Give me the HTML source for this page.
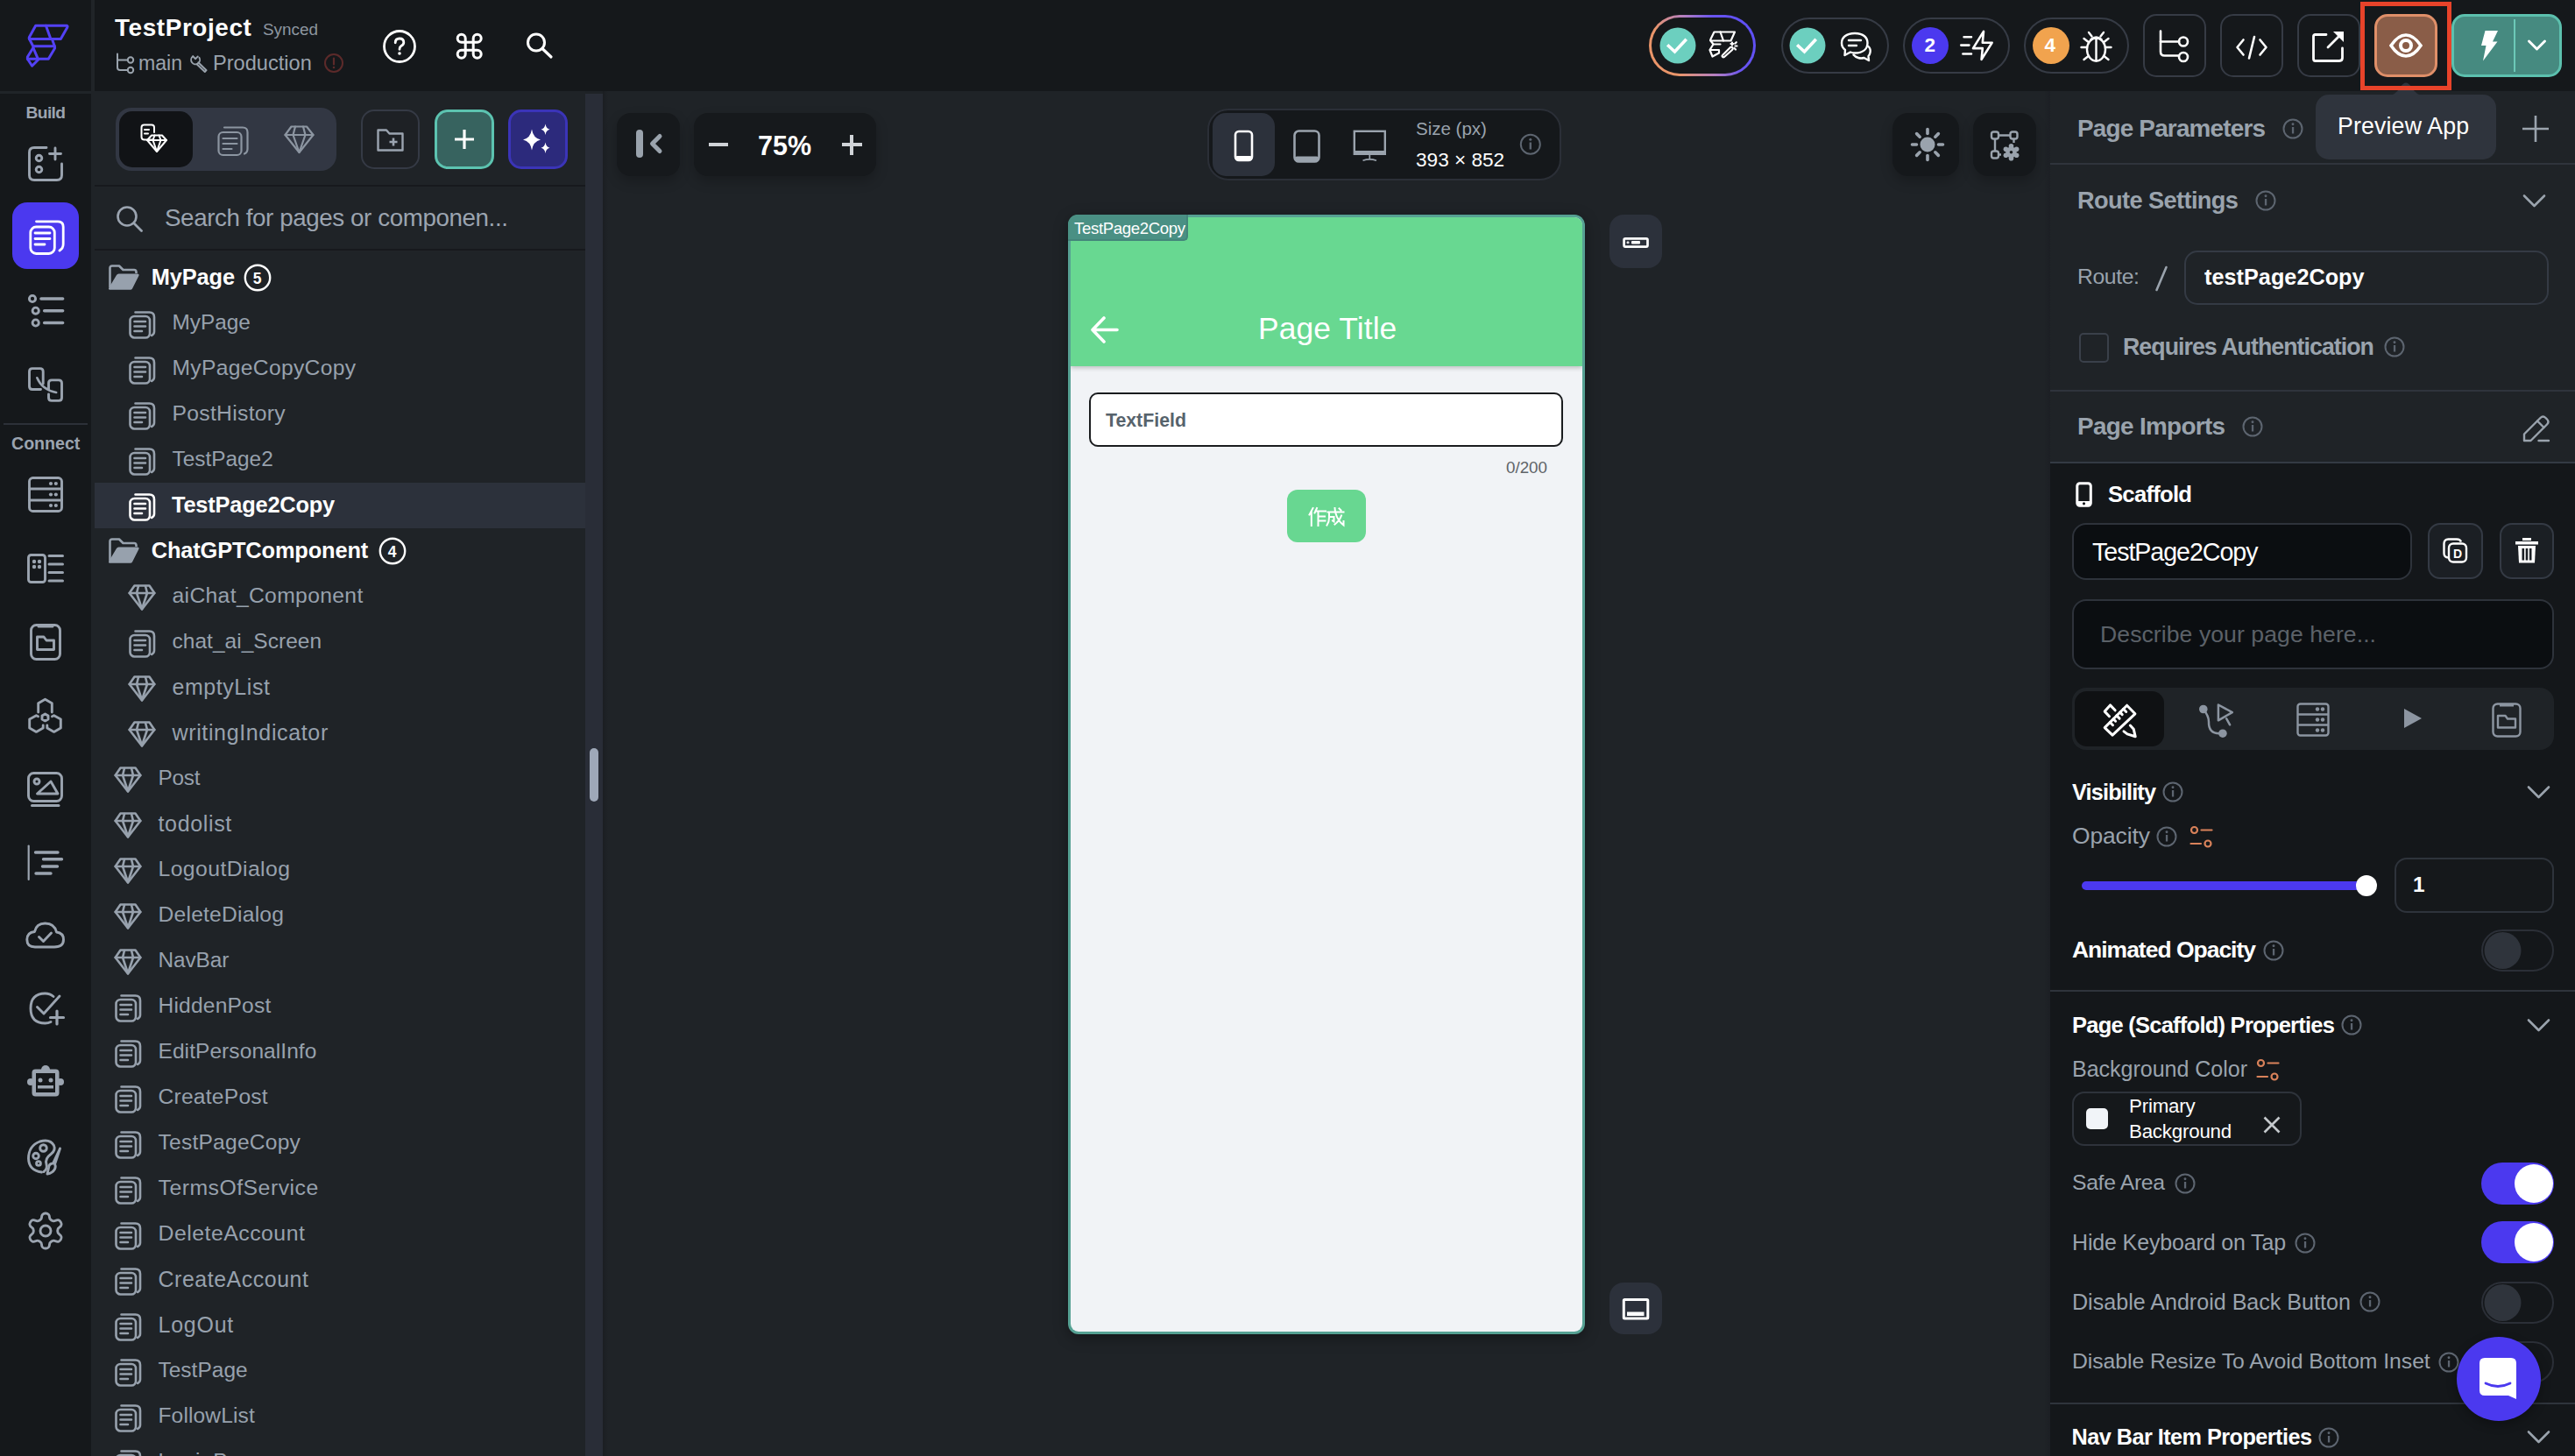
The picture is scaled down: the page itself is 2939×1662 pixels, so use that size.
<!DOCTYPE html>
<html><head><meta charset="utf-8">
<style>
*{box-sizing:border-box;margin:0;padding:0}
html,body{width:2939px;height:1662px;overflow:hidden;background:#1e2226;font-family:"Liberation Sans",sans-serif}
.a{position:absolute}
.t{position:absolute;white-space:nowrap;line-height:1}
svg{position:absolute;overflow:visible}
</style></head><body>
<div class="a" style="left:0px;top:0px;width:2939px;height:104px;background:#15181b;border-radius:0px;"></div>
<div class="a" style="left:0px;top:104px;width:104px;height:1558px;background:#15181b;border-radius:0px;"></div>
<div class="a" style="left:104px;top:0px;width:4px;height:104px;background:#202428;border-radius:0px;"></div>
<div class="a" style="left:0px;top:104px;width:108px;height:3px;background:#202428;border-radius:0px;"></div>
<div class="a" style="left:104px;top:104px;width:4px;height:1558px;background:#1f2327;border-radius:0px;"></div>
<div class="a" style="left:108px;top:104px;width:560px;height:1558px;background:#1f2327;border-radius:0px;"></div>
<div class="a" style="left:668px;top:107px;width:20px;height:1555px;background:#292d37;border-radius:0px;"></div>
<div class="a" style="left:673px;top:854px;width:10px;height:61px;background:#9ea8b8;border-radius:5px;"></div>
<div class="a" style="left:688px;top:104px;width:1652px;height:1558px;background:#1f2327;border-radius:0px;"></div>
<div class="a" style="left:688px;top:104px;width:6px;height:1558px;background:linear-gradient(90deg,#1b1e22,#1f2327)"></div>
<div class="a" style="left:2333px;top:104px;width:7px;height:1558px;background:linear-gradient(90deg,#1f2327,#1c1f24)"></div>
<div class="a" style="left:2340px;top:104px;width:599px;height:424px;background:#1f2327;border-radius:0px;"></div>
<div class="a" style="left:2340px;top:528px;width:599px;height:1134px;background:#14171a;border-radius:0px;"></div>
<svg style="left:0px;top:0px;" width="100" height="100" viewBox="0 0 100 100"><g fill="none" stroke="#5341f5" stroke-width="3" stroke-linejoin="round" stroke-linecap="round"><path d="M40.7,29.2 L76.2,29.2 Q77.6,29.6 76.8,31.2 L69.3,44.5 L33.5,44.5 Q32.8,43.6 33.4,42.4 Z"/><path d="M52.4,29.2 L57.9,44.5"/><path d="M33.5,44.5 L37.8,52.7 L62.3,52.7 L59.4,44.5"/><path d="M62.3,52.7 L62.6,55 L55.3,67.3 L31.4,67.3 L31.4,65 L37.9,54.5"/><path d="M37.9,54.5 L43.4,67.3"/><path d="M31.4,67.3 L36.6,75.2 L43.8,68"/></g></svg>
<div class="t" style="left:131px;top:18.38px;font-size:27.9px;color:#ffffff;font-weight:bold;letter-spacing:0.6px;">TestProject</div>
<div class="t" style="left:300px;top:25.00px;font-size:18.9px;color:#8d96a0;font-weight:normal;letter-spacing:0px;">Synced</div>
<svg style="left:132px;top:60px;" width="24" height="24" viewBox="0 0 24 24"><g fill="none" stroke="#9aa3ad" stroke-width="2" stroke-linecap="round"><path d="M2,1.5 V17 Q2,20 5,20 H13"/><path d="M2,8.5 H13"/><circle cx="17" cy="8.5" r="3.2"/><circle cx="17" cy="20" r="3.2"/></g></svg>
<div class="t" style="left:158px;top:61.45px;font-size:23.1px;color:#9aa3ad;font-weight:normal;letter-spacing:0px;">main</div>
<svg style="left:210px;top:56px;" width="40" height="32" viewBox="0 0 40 32"><g fill="none" stroke="#9aa3ad" stroke-width="1.9" stroke-linejoin="round" stroke-linecap="round"><path d="M10.2,8.3 A5,5 0 1 0 17.4,9.7"/><path d="M10.2,8.3 L13.2,11.2 L15.8,8.4"/><path d="M16.3,15.3 L25.6,24.2 L23.8,26 L14.6,17.2"/></g></svg>
<div class="t" style="left:243px;top:61.02px;font-size:23.6px;color:#9aa3ad;font-weight:normal;letter-spacing:0px;">Production</div>
<svg style="left:370px;top:61px;" width="22" height="22" viewBox="0 0 22 22"><circle cx="11" cy="11" r="10" fill="none" stroke="#5c2a2a" stroke-width="2"/><path d="M11,5.5 V12.5" stroke="#5c2a2a" stroke-width="2.2" stroke-linecap="round"/><circle cx="11" cy="16" r="1.3" fill="#5c2a2a"/></svg>
<svg style="left:437px;top:34px;" width="38" height="38" viewBox="0 0 38 38"><circle cx="19" cy="19" r="17.5" fill="none" stroke="#fff" stroke-width="2.8"/><path d="M14.2,14.8 Q14.2,10 19,10 Q23.8,10 23.8,14.5 Q23.8,17 20.8,18.6 Q19,19.6 19,22.3" fill="none" stroke="#fff" stroke-width="2.8" stroke-linecap="round"/><circle cx="19" cy="27" r="1.8" fill="#fff"/></svg>
<svg style="left:520px;top:37px;" width="31" height="31" viewBox="0 0 31 31"><path transform="translate(-2.3,-2.3) scale(1.5)" fill="none" stroke="#fff" stroke-width="2" d="M15 6v12a3 3 0 1 0 3-3H6a3 3 0 1 0 3 3V6a3 3 0 1 0-3 3h12a3 3 0 1 0-3-3"/></svg>
<svg style="left:599.5px;top:37px;" width="31" height="29" viewBox="0 0 31 29"><circle cx="12" cy="11.5" r="9.5" fill="none" stroke="#fff" stroke-width="3"/><path d="M19,18.5 L29,28" stroke="#fff" stroke-width="3.2" stroke-linecap="round"/></svg>
<div class="a" style="left:1882px;top:17px;width:122px;height:70px;border-radius:35px;background:linear-gradient(62deg,#eb9468 0%,#e9956a 22%,#b47fc0 48%,#6a55f0 68%,#5a4df7 100%)"></div>
<div class="a" style="left:1885px;top:20px;width:116px;height:64px;background:#15181b;border-radius:32px;"></div>
<svg style="left:1894px;top:31px;" width="42" height="42" viewBox="0 0 42 42"><circle cx="21" cy="21" r="20.5" fill="#6ccfbf"/><path d="M10.5,21.5 L17.5,28 L29.5,15" fill="none" stroke="#fff" stroke-width="3.6" stroke-linecap="square"/></svg>
<svg style="left:1950px;top:35px;" width="34" height="34" viewBox="0 0 34 34"><g fill="none" stroke="#fff" stroke-width="2.2" stroke-linejoin="round" stroke-linecap="round"><path d="M6.5,1.5 H30 L25.5,11.5 H2.5 Q1.8,10.8 2.3,10 Z"/><path d="M13.5,1.5 L17,11.5"/><path d="M2.5,11.5 L5.5,15.5 H13.5"/><path d="M5.5,15.5 L1.5,22 L4.5,29.5 L12,25.5 V22 H1.5"/><path d="M16,28 L25,19 Q26.5,18 27.5,19.5 Q28.3,20.8 27,22 L18,30 Q16.5,30.8 15.7,29.5 Q15.2,28.7 16,28 Z"/><path d="M27,13.5 V16.5 M25.5,15 H28.5 M30.5,14.5 L31.8,13.2 M30.5,17.5 H32.5 M29.5,20 L31,21.5"/></g></svg>
<div class="a" style="left:2033px;top:20px;width:123px;height:64px;background:#15181b;border:2px solid #363b45;border-radius:32px;"></div>
<svg style="left:2042px;top:31px;" width="42" height="42" viewBox="0 0 42 42"><circle cx="21" cy="21" r="20.5" fill="#6ccfbf"/><path d="M10.5,21.5 L17.5,28 L29.5,15" fill="none" stroke="#fff" stroke-width="3.6" stroke-linecap="square"/></svg>
<svg style="left:2100px;top:36px;" width="38" height="36" viewBox="0 0 38 36"><g fill="none" stroke="#fff" stroke-width="2.4" stroke-linejoin="round" stroke-linecap="round"><path d="M17,2 C7,2 2,7 2,13 C2,17 4,19.5 6,21 L5.5,27 L12,23.5 Q14.5,24.5 17,24.5 C27,24.5 31.5,19.5 31.5,13 C31.5,7 27,2 17,2 Z"/><path d="M10,10 H24 M10,16 H19"/><path d="M32.5,17 Q35.5,20 34.5,24 Q34,26.5 32.5,28 L33,33 L27.5,30 Q24,31 21,30 Q17.5,29 15.5,26.5"/></g></svg>
<div class="a" style="left:2172px;top:20px;width:122px;height:64px;background:#15181b;border:2px solid #363b45;border-radius:32px;"></div>
<svg style="left:2182px;top:31px;" width="42" height="42" viewBox="0 0 42 42"><circle cx="21" cy="21" r="21" fill="#4b39ef"/></svg>
<div class="t" style="left:2196.5px;top:40.95px;font-size:22.5px;color:#ffffff;font-weight:bold;letter-spacing:0px;">2</div>
<svg style="left:2237px;top:35px;" width="40" height="36" viewBox="0 0 40 36"><g fill="none" stroke="#fff" stroke-width="2.6" stroke-linejoin="round" stroke-linecap="round"><path d="M27,0.9 L15,20.1 H25.8 L24.6,32.9 L36.6,13.7 H25.8 Z"/><path d="M4.6,7.3 H13 M1.3,16.6 H10.4 M3.4,26.5 H13"/></g></svg>
<div class="a" style="left:2310px;top:20px;width:120px;height:64px;background:#15181b;border:2px solid #363b45;border-radius:32px;"></div>
<svg style="left:2320px;top:31px;" width="42" height="42" viewBox="0 0 42 42"><circle cx="21" cy="21" r="21" fill="#f1a34e"/></svg>
<div class="t" style="left:2333.5px;top:40.95px;font-size:22.5px;color:#ffffff;font-weight:bold;letter-spacing:0px;">4</div>
<svg style="left:2374px;top:35px;" width="37" height="37" viewBox="0 0 37 37"><g fill="none" stroke="#fff" stroke-width="2.4" stroke-linecap="round" stroke-linejoin="round"><ellipse cx="18.5" cy="21.5" rx="10.5" ry="13"/><path d="M18.5,8.5 V34.5"/><path d="M12.5,10 Q18.5,5 24.5,10"/><path d="M10,2 L13.5,6.5 M27,2 L23.5,6.5 M1.5,19 H7.5 M29.5,19 H35.5 M4.5,9 L9,12.5 M32.5,9 L28,12.5 M4.5,33 L9,29.5 M32.5,33 L28,29.5"/></g></svg>
<div class="a" style="left:2446px;top:16px;width:72px;height:72px;background:#15181b;border:2px solid #363b45;border-radius:15px;"></div>
<div class="a" style="left:2534px;top:16px;width:72px;height:72px;background:#15181b;border:2px solid #363b45;border-radius:15px;"></div>
<div class="a" style="left:2622px;top:16px;width:72px;height:72px;background:#15181b;border:2px solid #363b45;border-radius:15px;"></div>
<svg style="left:2464px;top:34px;" width="36" height="38" viewBox="0 0 36 38"><g fill="none" stroke="#fff" stroke-width="2.6" stroke-linecap="round"><path d="M2,1.5 V25 Q2,29.5 6.5,29.5 H23"/><path d="M2,13.5 H23"/><circle cx="28" cy="13.5" r="5"/><circle cx="28" cy="31" r="5"/></g></svg>
<svg style="left:2552px;top:40px;" width="36" height="28" viewBox="0 0 36 28"><g fill="none" stroke="#fff" stroke-width="2.6" stroke-linecap="round" stroke-linejoin="round"><path d="M8.5,5.5 L1.5,14 L8.5,22.5 M27.5,5.5 L34.5,14 L27.5,22.5 M21,2 L15,26.5"/></g></svg>
<svg style="left:2639px;top:35px;" width="37" height="37" viewBox="0 0 37 37"><g fill="none" stroke="#fff" stroke-width="2.8" stroke-linecap="round" stroke-linejoin="round"><path d="M16,4.5 H3.5 Q1.5,4.5 1.5,6.5 V32 Q1.5,34.5 3.5,34.5 H31 Q34.5,34.5 34.5,31 V20"/><path d="M18,19 L33,4"/></g><path d="M24,1 H36 V13 Z" fill="#fff"/></svg>
<div class="a" style="left:2710px;top:16px;width:72px;height:72px;background:#8a5d48;border:3px solid #df8f69;border-radius:15px;"></div>
<svg style="left:2727px;top:38px;" width="38" height="28" viewBox="0 0 38 28"><path d="M2,14 Q10,2 19,2 Q28,2 36,14 Q28,26 19,26 Q10,26 2,14 Z" fill="none" stroke="#fff" stroke-width="3.6"/><circle cx="19" cy="14" r="6" fill="none" stroke="#fff" stroke-width="4"/></svg>
<div class="a" style="left:2798px;top:16px;width:126px;height:72px;background:#468a80;border:3px solid #5cc0ae;border-radius:15px;"></div>
<div class="a" style="left:2869px;top:22px;width:2px;height:60px;background:#6cc9b8;border-radius:0px;"></div>
<svg style="left:2830px;top:35px;" width="22" height="35" viewBox="0 0 22 35"><path d="M6.5,0 H21 L15,12.5 H20.5 L4,34.5 L7.5,17 H2 Z" fill="#fff"/></svg>
<svg style="left:2884px;top:44px;" width="24" height="16" viewBox="0 0 24 16"><path d="M2.5,3 L11.5,12 L20.5,3" fill="none" stroke="#fff" stroke-width="3" stroke-linecap="round" stroke-linejoin="round"/></svg>
<div class="t" style="left:29.5px;top:118.75px;font-size:19.2px;color:#9ba4b0;font-weight:bold;letter-spacing:-0.6px;">Build</div>
<svg style="left:32px;top:167px;" width="44" height="44" viewBox="0 0 44 44"><g fill="none" stroke="#9ba4b0" stroke-width="2.9" stroke-linecap="round" stroke-linejoin="round"><path d="M21,1.5 H7 Q1.5,1.5 1.5,7 V33 Q1.5,38.5 7,38.5 H33 Q38.5,38.5 38.5,33 V20"/><path d="M31,2 V15 M24.5,8.5 H37.5"/><circle cx="12.5" cy="13.5" r="3.3"/><circle cx="12.5" cy="26.5" r="3.3"/></g></svg>
<div class="a" style="left:14px;top:231px;width:76px;height:76px;background:#4b39ef;border-radius:17px;"></div>
<svg style="left:33px;top:251px;" width="44" height="44" viewBox="0 0 44 44"><g fill="none" stroke="#fff" stroke-width="2.8" stroke-linecap="round" stroke-linejoin="round"><rect x="1.8" y="8" width="27.5" height="30.5" rx="6.5"/><path d="M8.5,1.8 H33 Q39.2,1.8 39.2,8 V27.5 Q39.2,32.5 35,35"/><path d="M7,15 H24 M7,21.5 H24 M7,28 H18"/></g></svg>
<svg style="left:32px;top:336px;" width="44" height="44" viewBox="0 0 44 44"><g fill="none" stroke="#9ba4b0" stroke-width="2.9" stroke-linecap="round" stroke-linejoin="round"><circle cx="5" cy="5" r="3.6"/><circle cx="8.7" cy="18.7" r="3.6"/><circle cx="8.7" cy="32.5" r="3.6"/><path d="M15,5 H39.6 M18.7,18.7 H39.6 M18.7,32.5 H39.6" stroke-width="3.6"/></g></svg>
<svg style="left:32px;top:419px;" width="44" height="44" viewBox="0 0 44 44"><g fill="none" stroke="#9ba4b0" stroke-width="2.9" stroke-linecap="round" stroke-linejoin="round"><path d="M17.2,19 V5 Q17.2,1.6 13.8,1.6 H5 Q1.5,1.6 1.5,5 V22 Q1.5,25.5 5,25.5 H14.5"/><path d="M23.5,25 V18.3 Q23.5,14.9 27,14.9 H35 Q38.5,14.9 38.5,18.3 V35 Q38.5,38.4 35,38.4 H27 Q23.5,38.4 23.5,35 V31"/><path d="M10.3,12.3 Q16,26 32.2,29" stroke-width="2.6"/></g></svg>
<div class="a" style="left:4px;top:483px;width:96px;height:2px;background:#2c3038;border-radius:0px;"></div>
<div class="t" style="left:13px;top:497.41px;font-size:19.6px;color:#9ba4b0;font-weight:bold;letter-spacing:0px;">Connect</div>
<svg style="left:32px;top:544px;" width="44" height="44" viewBox="0 0 44 44"><g fill="none" stroke="#9ba4b0" stroke-width="2.9" stroke-linecap="round" stroke-linejoin="round"><rect x="1.5" y="1.5" width="37" height="38" rx="4"/><path d="M1.5,14 H38.5 M1.5,27 H38.5"/><g fill="#9ba4b0" stroke="none"><circle cx="26" cy="8" r="2.1"/><circle cx="31.8" cy="8" r="2.1"/><circle cx="26" cy="20.5" r="2.1"/><circle cx="31.8" cy="20.5" r="2.1"/><circle cx="26" cy="33" r="2.1"/><circle cx="31.8" cy="33" r="2.1"/></g></g></svg>
<svg style="left:31px;top:632px;" width="44" height="44" viewBox="0 0 44 44"><g fill="none" stroke="#9ba4b0" stroke-width="2.9" stroke-linecap="round" stroke-linejoin="round"><rect x="1.5" y="1.5" width="19" height="31" rx="3"/><path d="M25,2.5 H40.5 M25,12 H40.5 M25,21.5 H40.5 M25,31 H40.5" stroke-width="3"/><g fill="#9ba4b0" stroke="none"><circle cx="8" cy="9" r="2.2"/><circle cx="14" cy="9" r="2.2"/><circle cx="8" cy="15" r="2.2"/><circle cx="14" cy="15" r="2.2"/></g></g></svg>
<svg style="left:34px;top:712px;" width="44" height="44" viewBox="0 0 44 44"><g fill="none" stroke="#9ba4b0" stroke-width="2.9" stroke-linecap="round" stroke-linejoin="round"><rect x="1.5" y="1.5" width="33" height="39" rx="6"/><path d="M10,3 H26" stroke-width="3"/><path d="M8.5,15 V29.5 H27.5 V19 H19 L16,15 Z"/></g></svg>
<svg style="left:31px;top:796px;" width="44" height="44" viewBox="0 0 44 44"><g fill="none" stroke="#9ba4b0" stroke-width="2.9" stroke-linecap="round" stroke-linejoin="round"><path d="M12.7,17 V6.7 L20.5,2.25 L28.3,6.7 V17"/><path d="M12.5,21.8 L10.4,20.8 L2.7,25.1 V35.1 L10.4,39.4 L18.2,35.1 V32"/><path d="M28.5,21.8 L30.6,20.8 L38.3,25.1 V35.1 L30.6,39.4 L22.8,35.1 V32"/><path d="M20.5,18.9 L24,20.9 V24.9 L20.5,26.9 L17,24.9 V20.9 Z"/></g></svg>
<svg style="left:31px;top:881px;" width="44" height="44" viewBox="0 0 44 44"><g fill="none" stroke="#9ba4b0" stroke-width="2.9" stroke-linecap="round" stroke-linejoin="round"><rect x="1.5" y="1.5" width="38" height="32" rx="6"/><circle cx="11" cy="11" r="3"/><path d="M11.5,25 H35 L27,11 Z"/><path d="M5.5,38.5 H36" stroke-width="3"/></g></svg>
<svg style="left:31px;top:964px;" width="44" height="44" viewBox="0 0 44 44"><g fill="none" stroke="#9ba4b0" stroke-width="2.9" stroke-linecap="round" stroke-linejoin="round"><path d="M1.7,1.5 V40" stroke-width="2.2"/><path d="M9.5,9 H35 M18.5,16.7 H39.5 M17.5,25 H34.5 M10,33 H27" stroke-width="3.4"/></g></svg>
<svg style="left:29px;top:1052px;" width="44" height="44" viewBox="0 0 44 44"><g fill="none" stroke="#9ba4b0" stroke-width="2.9" stroke-linecap="round" stroke-linejoin="round"><path d="M11,29 H33 Q43.5,29 43.5,20.5 Q43.5,13 35.5,12 Q33,2 22.5,2 Q12.5,2 10.5,11.5 Q1.8,12.5 1.8,20.5 Q1.8,29 11,29 Z"/><path d="M15.5,17.5 L20.5,22.5 L29.5,13"/></g></svg>
<svg style="left:33px;top:1132px;" width="44" height="44" viewBox="0 0 44 44"><g fill="none" stroke="#9ba4b0" stroke-width="2.9" stroke-linecap="round" stroke-linejoin="round"><path d="M28,5.5 Q24,2 18.5,2 Q2,2 2,19 Q2,36 18.5,36 Q22,36 25,34.5"/><path d="M9.5,17.5 L17,25 L35,5"/><path d="M32,22 V37 M24.5,29.5 H39.5" stroke-width="3.2"/></g></svg>
<svg style="left:31px;top:1216px;" width="42" height="38" viewBox="0 0 42 38"><g fill="#9ba4b0"><circle cx="21" cy="5" r="5"/><rect x="5.5" y="4.5" width="31" height="31" rx="4"/><circle cx="4" cy="19" r="4"/><circle cx="38" cy="19" r="4"/></g><rect x="10" y="9" width="22" height="22" fill="#15181b"/><g fill="#9ba4b0"><circle cx="15" cy="17" r="2.5"/><circle cx="27" cy="17" r="2.5"/><rect x="12" y="23" width="18" height="3.5"/></g></svg>
<svg style="left:31px;top:1300px;" width="44" height="44" viewBox="0 0 44 44"><g fill="none" stroke="#9ba4b0" stroke-width="2.9" stroke-linecap="round" stroke-linejoin="round"><path d="M16.5,38 Q2,36 1.5,22.5 Q1.5,8 14.5,3 Q26,-0.5 30.5,7.5 Q33,13 27,17.5 Q20,22.5 22,29 Q23.5,34 19,37.5"/><circle cx="18.5" cy="10.5" r="3.8"/><circle cx="10" cy="19.5" r="3.3"/><circle cx="13" cy="28" r="2.4"/><path d="M37.5,11 L29.5,28 Q25,28 24.5,33 L23,40 Q29,39 31.5,34.5 Q33,31 31.5,29 Z"/></g></svg>
<svg style="left:28.4px;top:1381px;" width="48" height="48" viewBox="0 0 48 48"><g transform="scale(2)" fill="none" stroke="#9ba4b0" stroke-width="1.45" stroke-linecap="round" stroke-linejoin="round"><path d="M12.22 2h-.44a2 2 0 0 0-2 2v.18a2 2 0 0 1-1 1.73l-.43.25a2 2 0 0 1-2 0l-.15-.08a2 2 0 0 0-2.73.73l-.22.38a2 2 0 0 0 .73 2.73l.15.1a2 2 0 0 1 1 1.72v.51a2 2 0 0 1-1 1.74l-.15.09a2 2 0 0 0-.73 2.73l.22.38a2 2 0 0 0 2.73.73l.15-.08a2 2 0 0 1 2 0l.43.25a2 2 0 0 1 1 1.73V20a2 2 0 0 0 2 2h.44a2 2 0 0 0 2-2v-.18a2 2 0 0 1 1-1.73l.43-.25a2 2 0 0 1 2 0l.15.08a2 2 0 0 0 2.73-.73l.22-.39a2 2 0 0 0-.73-2.73l-.15-.08a2 2 0 0 1-1-1.74v-.5a2 2 0 0 1 1-1.74l.15-.09a2 2 0 0 0 .73-2.73l-.22-.38a2 2 0 0 0-2.73-.73l-.15.08a2 2 0 0 1-2 0l-.43-.25a2 2 0 0 1-1-1.73V4a2 2 0 0 0-2-2z"/><circle cx="12" cy="12" r="3"/></g></svg>
<div class="a" style="left:132px;top:123px;width:252px;height:72px;background:#323743;border-radius:18px;"></div>
<div class="a" style="left:136px;top:127px;width:84px;height:64px;background:#111316;border-radius:15px;"></div>
<svg style="left:160px;top:141px;" width="36" height="36" viewBox="0 0 36 36"><g fill="none" stroke="#fff" stroke-width="2" stroke-linejoin="round" stroke-linecap="round"><path d="M14,18.5 H5 Q1.5,18.5 1.5,15 V4.5 Q1.5,1.5 4.5,1.5 H13 Q16,1.5 16,4.5 V10"/><path d="M5,7 H10 M5,11.5 H9"/><path d="M13,13.5 H25 L30,19 L19,32 L8,19 Z"/><path d="M8,19 H30 M16.5,13.5 L14.5,19 L19,32 L23.5,19 L21.5,13.5"/></g></svg>
<svg style="left:248px;top:144px;" width="36" height="36" viewBox="0 0 36 36"><g fill="none" stroke="#8c95a1" stroke-width="2.2" stroke-linejoin="round" stroke-linecap="round"><rect x="1.5" y="7" width="26" height="26" rx="5"/><path d="M8,1.5 H29 Q34.5,1.5 34.5,7 V26 Q34.5,30 31,31.5"/><path d="M6.5,14 H22.5 M6.5,20 H22.5 M6.5,26 H16.5"/></g></svg>
<svg style="left:325px;top:143px;" width="36" height="36" viewBox="0 0 36 36"><g fill="none" stroke="#8c95a1" stroke-width="2.2" stroke-linejoin="round" stroke-linecap="round"><path d="M7.5,1.5 H25 L32.5,11 L16.5,31 L0.5,11 Z"/><path d="M0.5,11 H32.5 M12,1.5 L9.5,11 L16.5,31 L23.5,11 L21,1.5"/></g></svg>
<div class="a" style="left:412px;top:125px;width:67px;height:68px;background:#1e2125;border:2px solid #353a45;border-radius:15px;"></div>
<svg style="left:430px;top:147px;" width="32" height="27" viewBox="0 0 32 27"><g fill="none" stroke="#9ba4b0" stroke-width="2.4" stroke-linejoin="round"><path d="M1.5,1.5 H11 L14.5,5.5 H29.5 V24.5 H1.5 Z"/></g><path d="M19,10.5 V19.5 M14.5,15 H23.5" stroke="#9ba4b0" stroke-width="2.6"/></svg>
<div class="a" style="left:496px;top:125px;width:68px;height:68px;background:#37635f;border:3px solid #5cc3b0;border-radius:15px;"></div>
<svg style="left:518px;top:147px;" width="24" height="24" viewBox="0 0 24 24"><path d="M12,1 V23 M1,12 H23" stroke="#fff" stroke-width="3.2"/></svg>
<div class="a" style="left:580px;top:125px;width:68px;height:68px;background:#2c2a7c;border:3px solid #3b34b8;border-radius:15px;"></div>
<svg style="left:595px;top:140px;" width="40" height="40" viewBox="0 0 40 40"><g fill="#fff"><path d="M12,7.5 Q13.5,17.5 22,19.5 Q13.5,21.5 12,31.5 Q10.5,21.5 2,19.5 Q10.5,17.5 12,7.5 Z"/><path d="M27.5,1.5 Q28.3,6.8 32.5,7.8 Q28.3,8.8 27.5,14 Q26.7,8.8 22.5,7.8 Q26.7,6.8 27.5,1.5 Z"/><path d="M27.5,22.5 Q28.3,27.8 32.5,28.8 Q28.3,29.8 27.5,35 Q26.7,29.8 22.5,28.8 Q26.7,27.8 27.5,22.5 Z"/></g></svg>
<div class="a" style="left:108px;top:211px;width:560px;height:2px;background:#17191d;border-radius:0px;"></div>
<svg style="left:132px;top:234px;" width="32" height="32" viewBox="0 0 32 32"><circle cx="13" cy="13" r="10.5" fill="none" stroke="#9ba4b0" stroke-width="2.6"/><path d="M21,21 L29.5,29.5" stroke="#9ba4b0" stroke-width="2.8" stroke-linecap="round"/></svg>
<div class="t" style="left:188px;top:235.49px;font-size:27.77px;color:#9ba4b0;font-weight:normal;letter-spacing:-0.416px;">Search for pages or componen...</div>
<div class="a" style="left:108px;top:284px;width:560px;height:2px;background:#17191d;border-radius:0px;"></div>
<svg style="left:123px;top:302px;" width="38" height="30" viewBox="0 0 38 30"><path d="M2.5,26 V4 Q2.5,1.5 5,1.5 H13 L17.5,6 H30 Q32.5,6 32.5,8.5 V10" fill="none" stroke="#97a1ad" stroke-width="2.6" stroke-linejoin="round"/><path d="M1,27 L10,12 Q10.8,10.5 12.5,10.5 H33.5 Q36.5,10.5 35.3,13 L28,27.5 Q27.3,28.8 25.8,28.8 H3 Q0.5,28.8 1,27 Z" fill="#97a1ad"/></svg>
<div class="t" style="left:172.8px;top:303.50px;font-size:25.4px;color:#ffffff;font-weight:bold;letter-spacing:-0.15px;">MyPage</div>
<svg style="left:147px;top:355px;" width="32" height="32" viewBox="0 0 32 32"><g fill="none" stroke="#97a1ad" stroke-width="2.6" stroke-linejoin="round" stroke-linecap="round"><rect x="1.5" y="6" width="22.5" height="24.5" rx="5"/><path d="M7.5,1.5 H23.5 Q29,1.5 29,7 V23.5 Q29,26.5 26,28"/><path d="M6.5,12 H19 M6.5,17.5 H19 M6.5,23 H15"/></g></svg>
<div class="t" style="left:196.5px;top:356.34px;font-size:24.41px;color:#97a1ad;font-weight:normal;letter-spacing:-0.05px;">MyPage</div>
<svg style="left:147px;top:407px;" width="32" height="32" viewBox="0 0 32 32"><g fill="none" stroke="#97a1ad" stroke-width="2.6" stroke-linejoin="round" stroke-linecap="round"><rect x="1.5" y="6" width="22.5" height="24.5" rx="5"/><path d="M7.5,1.5 H23.5 Q29,1.5 29,7 V23.5 Q29,26.5 26,28"/><path d="M6.5,12 H19 M6.5,17.5 H19 M6.5,23 H15"/></g></svg>
<div class="t" style="left:196.5px;top:408.13px;font-size:24.65px;color:#97a1ad;font-weight:normal;letter-spacing:0.314px;">MyPageCopyCopy</div>
<svg style="left:147px;top:459px;" width="32" height="32" viewBox="0 0 32 32"><g fill="none" stroke="#97a1ad" stroke-width="2.6" stroke-linejoin="round" stroke-linecap="round"><rect x="1.5" y="6" width="22.5" height="24.5" rx="5"/><path d="M7.5,1.5 H23.5 Q29,1.5 29,7 V23.5 Q29,26.5 26,28"/><path d="M6.5,12 H19 M6.5,17.5 H19 M6.5,23 H15"/></g></svg>
<div class="t" style="left:196.5px;top:460.10px;font-size:24.69px;color:#97a1ad;font-weight:normal;letter-spacing:0.298px;">PostHistory</div>
<svg style="left:147px;top:511px;" width="32" height="32" viewBox="0 0 32 32"><g fill="none" stroke="#97a1ad" stroke-width="2.6" stroke-linejoin="round" stroke-linecap="round"><rect x="1.5" y="6" width="22.5" height="24.5" rx="5"/><path d="M7.5,1.5 H23.5 Q29,1.5 29,7 V23.5 Q29,26.5 26,28"/><path d="M6.5,12 H19 M6.5,17.5 H19 M6.5,23 H15"/></g></svg>
<div class="t" style="left:196.5px;top:512.32px;font-size:24.43px;color:#97a1ad;font-weight:normal;letter-spacing:-0.017px;">TestPage2</div>
<div class="a" style="left:108px;top:551px;width:560px;height:52px;background:#2c313b;border-radius:0px;"></div>
<svg style="left:147px;top:563px;" width="32" height="32" viewBox="0 0 32 32"><g fill="none" stroke="#ffffff" stroke-width="2.6" stroke-linejoin="round" stroke-linecap="round"><rect x="1.5" y="6" width="22.5" height="24.5" rx="5"/><path d="M7.5,1.5 H23.5 Q29,1.5 29,7 V23.5 Q29,26.5 26,28"/><path d="M6.5,12 H19 M6.5,17.5 H19 M6.5,23 H15"/></g></svg>
<div class="t" style="left:196px;top:563.50px;font-size:25.4px;color:#ffffff;font-weight:bold;letter-spacing:-0.2px;">TestPage2Copy</div>
<svg style="left:123px;top:614px;" width="38" height="30" viewBox="0 0 38 30"><path d="M2.5,26 V4 Q2.5,1.5 5,1.5 H13 L17.5,6 H30 Q32.5,6 32.5,8.5 V10" fill="none" stroke="#97a1ad" stroke-width="2.6" stroke-linejoin="round"/><path d="M1,27 L10,12 Q10.8,10.5 12.5,10.5 H33.5 Q36.5,10.5 35.3,13 L28,27.5 Q27.3,28.8 25.8,28.8 H3 Q0.5,28.8 1,27 Z" fill="#97a1ad"/></svg>
<div class="t" style="left:172.8px;top:615.50px;font-size:25.4px;color:#ffffff;font-weight:bold;letter-spacing:-0.15px;">ChatGPTComponent</div>
<svg style="left:147px;top:667px;" width="32" height="32" viewBox="0 0 32 32"><g fill="none" stroke="#97a1ad" stroke-width="2.6" stroke-linejoin="round" stroke-linecap="round"><path d="M6.5,1.5 H23.5 L29.3,10 L15,28.5 L0.7,10 Z"/><path d="M0.7,10 H29.3 M11,2 L9,10 L15,28 L21,10 L19,2"/></g></svg>
<div class="t" style="left:196.5px;top:668.10px;font-size:24.69px;color:#97a1ad;font-weight:normal;letter-spacing:0.337px;">aiChat_Component</div>
<svg style="left:147px;top:719px;" width="32" height="32" viewBox="0 0 32 32"><g fill="none" stroke="#97a1ad" stroke-width="2.6" stroke-linejoin="round" stroke-linecap="round"><rect x="1.5" y="6" width="22.5" height="24.5" rx="5"/><path d="M7.5,1.5 H23.5 Q29,1.5 29,7 V23.5 Q29,26.5 26,28"/><path d="M6.5,12 H19 M6.5,17.5 H19 M6.5,23 H15"/></g></svg>
<div class="t" style="left:196.5px;top:720.29px;font-size:24.47px;color:#97a1ad;font-weight:normal;letter-spacing:0.041px;">chat_ai_Screen</div>
<svg style="left:147px;top:771px;" width="32" height="32" viewBox="0 0 32 32"><g fill="none" stroke="#97a1ad" stroke-width="2.6" stroke-linejoin="round" stroke-linecap="round"><path d="M6.5,1.5 H23.5 L29.3,10 L15,28.5 L0.7,10 Z"/><path d="M0.7,10 H29.3 M11,2 L9,10 L15,28 L21,10 L19,2"/></g></svg>
<div class="t" style="left:196.5px;top:771.91px;font-size:24.92px;color:#97a1ad;font-weight:normal;letter-spacing:0.596px;">emptyList</div>
<svg style="left:147px;top:823px;" width="32" height="32" viewBox="0 0 32 32"><g fill="none" stroke="#97a1ad" stroke-width="2.6" stroke-linejoin="round" stroke-linecap="round"><path d="M6.5,1.5 H23.5 L29.3,10 L15,28.5 L0.7,10 Z"/><path d="M0.7,10 H29.3 M11,2 L9,10 L15,28 L21,10 L19,2"/></g></svg>
<div class="t" style="left:196.5px;top:823.80px;font-size:25.04px;color:#97a1ad;font-weight:normal;letter-spacing:0.627px;">writingIndicator</div>
<svg style="left:130.5px;top:875px;" width="32" height="32" viewBox="0 0 32 32"><g fill="none" stroke="#97a1ad" stroke-width="2.6" stroke-linejoin="round" stroke-linecap="round"><path d="M6.5,1.5 H23.5 L29.3,10 L15,28.5 L0.7,10 Z"/><path d="M0.7,10 H29.3 M11,2 L9,10 L15,28 L21,10 L19,2"/></g></svg>
<div class="t" style="left:180.5px;top:876.41px;font-size:24.32px;color:#97a1ad;font-weight:normal;letter-spacing:-0.188px;">Post</div>
<svg style="left:130.5px;top:927px;" width="32" height="32" viewBox="0 0 32 32"><g fill="none" stroke="#97a1ad" stroke-width="2.6" stroke-linejoin="round" stroke-linecap="round"><path d="M6.5,1.5 H23.5 L29.3,10 L15,28.5 L0.7,10 Z"/><path d="M0.7,10 H29.3 M11,2 L9,10 L15,28 L21,10 L19,2"/></g></svg>
<div class="t" style="left:180.5px;top:927.80px;font-size:25.04px;color:#97a1ad;font-weight:normal;letter-spacing:0.636px;">todolist</div>
<svg style="left:130.5px;top:979px;" width="32" height="32" viewBox="0 0 32 32"><g fill="none" stroke="#97a1ad" stroke-width="2.6" stroke-linejoin="round" stroke-linecap="round"><path d="M6.5,1.5 H23.5 L29.3,10 L15,28.5 L0.7,10 Z"/><path d="M0.7,10 H29.3 M11,2 L9,10 L15,28 L21,10 L19,2"/></g></svg>
<div class="t" style="left:180.5px;top:980.03px;font-size:24.77px;color:#97a1ad;font-weight:normal;letter-spacing:0.411px;">LogoutDialog</div>
<svg style="left:130.5px;top:1031px;" width="32" height="32" viewBox="0 0 32 32"><g fill="none" stroke="#97a1ad" stroke-width="2.6" stroke-linejoin="round" stroke-linecap="round"><path d="M6.5,1.5 H23.5 L29.3,10 L15,28.5 L0.7,10 Z"/><path d="M0.7,10 H29.3 M11,2 L9,10 L15,28 L21,10 L19,2"/></g></svg>
<div class="t" style="left:180.5px;top:1032.15px;font-size:24.63px;color:#97a1ad;font-weight:normal;letter-spacing:0.227px;">DeleteDialog</div>
<svg style="left:130.5px;top:1083px;" width="32" height="32" viewBox="0 0 32 32"><g fill="none" stroke="#97a1ad" stroke-width="2.6" stroke-linejoin="round" stroke-linecap="round"><path d="M6.5,1.5 H23.5 L29.3,10 L15,28.5 L0.7,10 Z"/><path d="M0.7,10 H29.3 M11,2 L9,10 L15,28 L21,10 L19,2"/></g></svg>
<div class="t" style="left:180.5px;top:1084.35px;font-size:24.39px;color:#97a1ad;font-weight:normal;letter-spacing:-0.084px;">NavBar</div>
<svg style="left:130.5px;top:1135px;" width="32" height="32" viewBox="0 0 32 32"><g fill="none" stroke="#97a1ad" stroke-width="2.6" stroke-linejoin="round" stroke-linecap="round"><rect x="1.5" y="6" width="22.5" height="24.5" rx="5"/><path d="M7.5,1.5 H23.5 Q29,1.5 29,7 V23.5 Q29,26.5 26,28"/><path d="M6.5,12 H19 M6.5,17.5 H19 M6.5,23 H15"/></g></svg>
<div class="t" style="left:180.5px;top:1136.19px;font-size:24.58px;color:#97a1ad;font-weight:normal;letter-spacing:0.19px;">HiddenPost</div>
<svg style="left:130.5px;top:1187px;" width="32" height="32" viewBox="0 0 32 32"><g fill="none" stroke="#97a1ad" stroke-width="2.6" stroke-linejoin="round" stroke-linecap="round"><rect x="1.5" y="6" width="22.5" height="24.5" rx="5"/><path d="M7.5,1.5 H23.5 Q29,1.5 29,7 V23.5 Q29,26.5 26,28"/><path d="M6.5,12 H19 M6.5,17.5 H19 M6.5,23 H15"/></g></svg>
<div class="t" style="left:180.5px;top:1188.25px;font-size:24.51px;color:#97a1ad;font-weight:normal;letter-spacing:0.073px;">EditPersonalInfo</div>
<svg style="left:130.5px;top:1239px;" width="32" height="32" viewBox="0 0 32 32"><g fill="none" stroke="#97a1ad" stroke-width="2.6" stroke-linejoin="round" stroke-linecap="round"><rect x="1.5" y="6" width="22.5" height="24.5" rx="5"/><path d="M7.5,1.5 H23.5 Q29,1.5 29,7 V23.5 Q29,26.5 26,28"/><path d="M6.5,12 H19 M6.5,17.5 H19 M6.5,23 H15"/></g></svg>
<div class="t" style="left:180.5px;top:1240.16px;font-size:24.62px;color:#97a1ad;font-weight:normal;letter-spacing:0.229px;">CreatePost</div>
<svg style="left:130.5px;top:1291px;" width="32" height="32" viewBox="0 0 32 32"><g fill="none" stroke="#97a1ad" stroke-width="2.6" stroke-linejoin="round" stroke-linecap="round"><rect x="1.5" y="6" width="22.5" height="24.5" rx="5"/><path d="M7.5,1.5 H23.5 Q29,1.5 29,7 V23.5 Q29,26.5 26,28"/><path d="M6.5,12 H19 M6.5,17.5 H19 M6.5,23 H15"/></g></svg>
<div class="t" style="left:180.5px;top:1292.18px;font-size:24.6px;color:#97a1ad;font-weight:normal;letter-spacing:0.219px;">TestPageCopy</div>
<svg style="left:130.5px;top:1343px;" width="32" height="32" viewBox="0 0 32 32"><g fill="none" stroke="#97a1ad" stroke-width="2.6" stroke-linejoin="round" stroke-linecap="round"><rect x="1.5" y="6" width="22.5" height="24.5" rx="5"/><path d="M7.5,1.5 H23.5 Q29,1.5 29,7 V23.5 Q29,26.5 26,28"/><path d="M6.5,12 H19 M6.5,17.5 H19 M6.5,23 H15"/></g></svg>
<div class="t" style="left:180.5px;top:1343.99px;font-size:24.82px;color:#97a1ad;font-weight:normal;letter-spacing:0.478px;">TermsOfService</div>
<svg style="left:130.5px;top:1395px;" width="32" height="32" viewBox="0 0 32 32"><g fill="none" stroke="#97a1ad" stroke-width="2.6" stroke-linejoin="round" stroke-linecap="round"><rect x="1.5" y="6" width="22.5" height="24.5" rx="5"/><path d="M7.5,1.5 H23.5 Q29,1.5 29,7 V23.5 Q29,26.5 26,28"/><path d="M6.5,12 H19 M6.5,17.5 H19 M6.5,23 H15"/></g></svg>
<div class="t" style="left:180.5px;top:1395.98px;font-size:24.83px;color:#97a1ad;font-weight:normal;letter-spacing:0.487px;">DeleteAccount</div>
<svg style="left:130.5px;top:1447px;" width="32" height="32" viewBox="0 0 32 32"><g fill="none" stroke="#97a1ad" stroke-width="2.6" stroke-linejoin="round" stroke-linecap="round"><rect x="1.5" y="6" width="22.5" height="24.5" rx="5"/><path d="M7.5,1.5 H23.5 Q29,1.5 29,7 V23.5 Q29,26.5 26,28"/><path d="M6.5,12 H19 M6.5,17.5 H19 M6.5,23 H15"/></g></svg>
<div class="t" style="left:180.5px;top:1447.94px;font-size:24.88px;color:#97a1ad;font-weight:normal;letter-spacing:0.568px;">CreateAccount</div>
<svg style="left:130.5px;top:1499px;" width="32" height="32" viewBox="0 0 32 32"><g fill="none" stroke="#97a1ad" stroke-width="2.6" stroke-linejoin="round" stroke-linecap="round"><rect x="1.5" y="6" width="22.5" height="24.5" rx="5"/><path d="M7.5,1.5 H23.5 Q29,1.5 29,7 V23.5 Q29,26.5 26,28"/><path d="M6.5,12 H19 M6.5,17.5 H19 M6.5,23 H15"/></g></svg>
<div class="t" style="left:180.5px;top:1499.87px;font-size:24.96px;color:#97a1ad;font-weight:normal;letter-spacing:0.789px;">LogOut</div>
<svg style="left:130.5px;top:1551px;" width="32" height="32" viewBox="0 0 32 32"><g fill="none" stroke="#97a1ad" stroke-width="2.6" stroke-linejoin="round" stroke-linecap="round"><rect x="1.5" y="6" width="22.5" height="24.5" rx="5"/><path d="M7.5,1.5 H23.5 Q29,1.5 29,7 V23.5 Q29,26.5 26,28"/><path d="M6.5,12 H19 M6.5,17.5 H19 M6.5,23 H15"/></g></svg>
<div class="t" style="left:180.5px;top:1552.29px;font-size:24.46px;color:#97a1ad;font-weight:normal;letter-spacing:0.02px;">TestPage</div>
<svg style="left:130.5px;top:1603px;" width="32" height="32" viewBox="0 0 32 32"><g fill="none" stroke="#97a1ad" stroke-width="2.6" stroke-linejoin="round" stroke-linecap="round"><rect x="1.5" y="6" width="22.5" height="24.5" rx="5"/><path d="M7.5,1.5 H23.5 Q29,1.5 29,7 V23.5 Q29,26.5 26,28"/><path d="M6.5,12 H19 M6.5,17.5 H19 M6.5,23 H15"/></g></svg>
<div class="t" style="left:180.5px;top:1604.22px;font-size:24.55px;color:#97a1ad;font-weight:normal;letter-spacing:0.128px;">FollowList</div>
<svg style="left:130.5px;top:1655px;" width="32" height="32" viewBox="0 0 32 32"><g fill="none" stroke="#97a1ad" stroke-width="2.6" stroke-linejoin="round" stroke-linecap="round"><rect x="1.5" y="6" width="22.5" height="24.5" rx="5"/><path d="M7.5,1.5 H23.5 Q29,1.5 29,7 V23.5 Q29,26.5 26,28"/><path d="M6.5,12 H19 M6.5,17.5 H19 M6.5,23 H15"/></g></svg>
<div class="t" style="left:180.5px;top:1656.35px;font-size:24.4px;color:#97a1ad;font-weight:normal;letter-spacing:0.6px;">LoginPage</div>
<svg style="left:278px;top:301px;" width="32" height="32" viewBox="0 0 32 32"><circle cx="16" cy="16" r="14.2" fill="none" stroke="#fff" stroke-width="2.4"/></svg>
<div class="t" style="left:288.8px;top:309.99px;font-size:17.5px;color:#fff;font-weight:bold;letter-spacing:0px;">5</div>
<svg style="left:432px;top:613px;" width="32" height="32" viewBox="0 0 32 32"><circle cx="16" cy="16" r="14.2" fill="none" stroke="#fff" stroke-width="2.4"/></svg>
<div class="t" style="left:442.8px;top:621.99px;font-size:17.5px;color:#fff;font-weight:bold;letter-spacing:0px;">4</div>
<div class="a" style="left:704px;top:129px;width:72px;height:72px;background:#16191c;border-radius:16px;box-shadow:0 6px 14px rgba(0,0,0,0.22);"></div>
<div class="a" style="left:726px;top:148px;width:8px;height:32px;background:#9aa3ad;border-radius:4px;"></div>
<svg style="left:740px;top:152px;" width="18" height="24" viewBox="0 0 18 24"><path d="M13,3.5 L4.5,12 L13,20.5" fill="none" stroke="#9aa3ad" stroke-width="5" stroke-linecap="round" stroke-linejoin="round"/></svg>
<div class="a" style="left:792px;top:129px;width:208px;height:72px;background:#16191c;border-radius:16px;box-shadow:0 6px 14px rgba(0,0,0,0.22);"></div>
<div class="a" style="left:808.5px;top:162.8px;width:22.5px;height:4.4px;background:#d0d3d7;border-radius:0px;"></div>
<div class="t" style="left:865px;top:151.18px;font-size:30.5px;color:#ffffff;font-weight:bold;letter-spacing:0px;">75%</div>
<div class="a" style="left:961px;top:162.8px;width:22.5px;height:4.4px;background:#d0d3d7;border-radius:0px;"></div>
<div class="a" style="left:970px;top:153.5px;width:4.4px;height:23px;background:#d0d3d7;border-radius:0px;"></div>
<div class="a" style="left:1378px;top:124px;width:404px;height:82px;background:#15181b;border:2px solid #2b2f37;border-radius:24px;"></div>
<div class="a" style="left:1384px;top:129px;width:71px;height:72px;background:#2c313b;border-radius:15px;"></div>
<svg style="left:1407px;top:147px;" width="26" height="40" viewBox="0 0 26 40"><rect x="3" y="3" width="19" height="33" rx="4" fill="none" stroke="#fff" stroke-width="2.6"/><rect x="3" y="31" width="19" height="5" rx="2" fill="#fff"/></svg>
<svg style="left:1475px;top:147px;" width="34" height="40" viewBox="0 0 34 40"><rect x="2.5" y="2.5" width="28" height="35" rx="5" fill="none" stroke="#9aa3ad" stroke-width="2.6"/><rect x="2.5" y="31.5" width="28" height="6" rx="3" fill="#9aa3ad"/></svg>
<svg style="left:1544px;top:148px;" width="40" height="38" viewBox="0 0 40 38"><rect x="1.8" y="1.8" width="35" height="26" fill="none" stroke="#9aa3ad" stroke-width="2.4"/><rect x="1.8" y="24" width="35" height="4.5" fill="#9aa3ad"/><path d="M19.3,28 V33 M11.5,35.2 Q19.3,32.5 27,35.2" fill="none" stroke="#9aa3ad" stroke-width="1.7"/></svg>
<div class="t" style="left:1616px;top:137.25px;font-size:20.5px;color:#9aa3ad;font-weight:normal;letter-spacing:0px;">Size (px)</div>
<div class="t" style="left:1616px;top:171.67px;font-size:22.6px;color:#ffffff;font-weight:normal;letter-spacing:0px;">393 × 852</div>
<svg style="left:1734px;top:152px;" width="26" height="26" viewBox="0 0 26 26"><circle cx="12.8" cy="12.8" r="11" fill="none" stroke="#5d6570" stroke-width="2"/><rect x="11.6" y="10.5" width="2.4" height="8" fill="#5d6570"/><circle cx="12.8" cy="7.3" r="1.5" fill="#5d6570"/></svg>
<div class="a" style="left:2160px;top:129px;width:76px;height:72px;background:#15181b;border-radius:18px;box-shadow:0 6px 14px rgba(0,0,0,0.22);"></div>
<svg style="left:2176px;top:141px;" width="48" height="48" viewBox="0 0 48 48"><circle cx="24" cy="24" r="8.5" fill="#9aa3ad"/><g stroke="#9aa3ad" stroke-width="3.6" stroke-linecap="round"><path d="M36.50,24.00 L41.50,24.00"/><path d="M32.84,32.84 L36.37,36.37"/><path d="M24.00,36.50 L24.00,41.50"/><path d="M15.16,32.84 L11.63,36.37"/><path d="M11.50,24.00 L6.50,24.00"/><path d="M15.16,15.16 L11.63,11.63"/><path d="M24.00,11.50 L24.00,6.50"/><path d="M32.84,15.16 L36.37,11.63"/></g></svg>
<div class="a" style="left:2252px;top:129px;width:72px;height:72px;background:#15181b;border-radius:18px;box-shadow:0 6px 14px rgba(0,0,0,0.22);"></div>
<svg style="left:2268px;top:145px;" width="40" height="40" viewBox="0 0 40 40"><g fill="none" stroke="#9aa3ad" stroke-width="2.4"><rect x="5" y="5.5" width="8" height="8" rx="2.5"/><rect x="26.5" y="5.5" width="8" height="8" rx="2.5"/><rect x="5" y="27.5" width="8" height="8" rx="2.5"/><path d="M13,9.5 H26.5 M9,13.5 V27.5 M30.5,13.5 V18 M13,31.5 H16"/></g><g fill="#9aa3ad"><circle cx="27.5" cy="28.7" r="6.3"/><circle cx="27.5" cy="21.7" r="2.8"/><circle cx="27.5" cy="35.7" r="2.8"/><circle cx="21.4" cy="25.2" r="2.8"/><circle cx="33.6" cy="25.2" r="2.8"/><circle cx="21.4" cy="32.2" r="2.8"/><circle cx="33.6" cy="32.2" r="2.8"/></g><circle cx="27.5" cy="28.7" r="1.8" fill="#15181b"/></svg>
<div class="a" style="left:1219px;top:245px;width:590px;height:1278px;border-radius:12px;background:#56a193;box-shadow:0 4px 16px rgba(0,0,0,0.35)"></div>
<div class="a" style="left:1222px;top:248px;width:584px;height:1272px;border-radius:9px;background:#f1f3f6;overflow:hidden"><div class="a" style="left:0;top:0;width:584px;height:170px;background:#68d891;box-shadow:0 2px 5px rgba(0,0,0,0.22)"></div></div>
<div class="a" style="left:1219px;top:245px;width:137px;height:30px;background:#4a9084;border-radius:11px 0 5px 0;border-right:2px solid #43857a;border-bottom:2px solid #43857a"></div>
<div class="t" style="left:1226px;top:251.76px;font-size:18.6px;color:#ffffff;font-weight:normal;letter-spacing:-0.35px;">TestPage2Copy</div>
<svg style="left:1244px;top:360px;" width="36" height="34" viewBox="0 0 36 34"><path d="M16,3 L3,16.5 L16,30 M3.5,16.5 H31" fill="none" stroke="#fff" stroke-width="3.6" stroke-linecap="round" stroke-linejoin="round"/></svg>
<div class="t" style="left:1436px;top:358.03px;font-size:35.4px;color:#ffffff;font-weight:normal;letter-spacing:0.1px;">Page Title</div>
<div class="a" style="left:1243px;top:448px;width:541px;height:62px;background:#ffffff;border:2px solid #1a1c1e;border-radius:10px;"></div>
<div class="t" style="left:1262px;top:469.97px;font-size:21.3px;color:#57636c;font-weight:bold;letter-spacing:0px;">TextField</div>
<div class="t" style="left:1719px;top:524.59px;font-size:18.8px;color:#606468;font-weight:normal;letter-spacing:0px;">0/200</div>
<div class="a" style="left:1469px;top:559px;width:90px;height:60px;background:#68d791;border-radius:12px;"></div>
<svg style="left:1493px;top:579px;" width="44" height="22" viewBox="0 0 44 22"><g fill="none" stroke="#fff" stroke-width="2" stroke-linecap="square"><path d="M5.5,1 L1.5,8.5 M3.8,5.5 V21"/><path d="M10,1 L7.5,6.5 M8.5,4.5 H20 M11.5,4.5 V21 M11.5,10.5 H19 M11.5,15.5 H19.5"/><path d="M22.5,5.5 H40.5 M24,5.5 V12 Q24,17 21.5,20.5 M24,11 H29.5 V16.5 L28,15.5 M30.5,1 Q31,13 40.5,20.5 V16 M35.5,1.5 L37.5,3.5 M38,9.5 Q36,15.5 30.5,19.5"/></g></svg>
<div class="a" style="left:1837px;top:245px;width:60px;height:61px;background:#2c313b;border-radius:16px;"></div>
<svg style="left:1850px;top:262px;" width="34" height="26" viewBox="0 0 34 26"><rect x="3.6" y="10.3" width="26.9" height="9.3" rx="1.5" fill="none" stroke="#fff" stroke-width="2.7"/><rect x="12" y="13" width="10" height="3.6" rx="1" fill="#fff"/><path d="M6.5,14.8 H9.5 M8,13.3 V16.3" stroke="#fff" stroke-width="1.2"/></svg>
<div class="a" style="left:1837px;top:1464px;width:60px;height:59px;background:#2c313b;border-radius:16px;"></div>
<svg style="left:1850px;top:1478px;" width="34" height="34" viewBox="0 0 34 34"><rect x="3.3" y="5.5" width="27.5" height="21.5" rx="1" fill="none" stroke="#fff" stroke-width="3"/><rect x="7" y="19.5" width="19.5" height="4.5" fill="#fff"/></svg>
<div class="t" style="left:2371px;top:133.42px;font-size:27.86px;color:#9aa3ad;font-weight:bold;letter-spacing:-0.793px;">Page Parameters</div>
<svg style="left:2603.5px;top:134px;" width="26" height="26" viewBox="0 0 26 26"><circle cx="13" cy="13" r="10.5" fill="none" stroke="#5d6570" stroke-width="2"/><rect x="11.9" y="11" width="2.3" height="7.5" fill="#5d6570"/><circle cx="13" cy="7.8" r="1.45" fill="#5d6570"/></svg>
<svg style="left:2877px;top:130px;" width="34" height="34" viewBox="0 0 34 34"><path d="M17,2 V32 M2,17 H32" stroke="#9aa3ad" stroke-width="2.6"/></svg>
<div class="a" style="left:2340px;top:186px;width:599px;height:2px;background:#2f343c;border-radius:0px;"></div>
<div class="t" style="left:2371px;top:215.28px;font-size:27.19px;color:#9aa3ad;font-weight:bold;letter-spacing:-0.603px;">Route Settings</div>
<svg style="left:2572.5px;top:216px;" width="26" height="26" viewBox="0 0 26 26"><circle cx="13" cy="13" r="10.5" fill="none" stroke="#5d6570" stroke-width="2"/><rect x="11.9" y="11" width="2.3" height="7.5" fill="#5d6570"/><circle cx="13" cy="7.8" r="1.45" fill="#5d6570"/></svg>
<svg style="left:2879px;top:221px;" width="28" height="18" viewBox="0 0 28 18"><path d="M2,2.5 L13.5,14 L25,2.5" fill="none" stroke="#9aa3ad" stroke-width="2.6" stroke-linecap="round" stroke-linejoin="round"/></svg>
<div class="t" style="left:2371px;top:304.07px;font-size:24.72px;color:#9aa3ad;font-weight:normal;letter-spacing:-0.368px;">Route:</div>
<svg style="left:2455px;top:302px;" width="24" height="32" viewBox="0 0 24 32"><path d="M17.5,3 L6.5,29" stroke="#9aa3ad" stroke-width="2.6" stroke-linecap="round"/></svg>
<div class="a" style="left:2493px;top:286px;width:416px;height:62px;background:#1f2327;border:2px solid #343a44;border-radius:15px;"></div>
<div class="t" style="left:2516px;top:303.68px;font-size:25.19px;color:#ffffff;font-weight:bold;letter-spacing:0.049px;">testPage2Copy</div>
<div class="a" style="left:2373px;top:380px;width:34px;height:34px;background:#1f2327;border:2px solid #3a404a;border-radius:5px;"></div>
<div class="t" style="left:2423px;top:383.07px;font-size:26.73px;color:#9aa3ad;font-weight:bold;letter-spacing:-0.948px;">Requires Authentication</div>
<svg style="left:2719.5px;top:383px;" width="26" height="26" viewBox="0 0 26 26"><circle cx="13" cy="13" r="10.5" fill="none" stroke="#5d6570" stroke-width="2"/><rect x="11.9" y="11" width="2.3" height="7.5" fill="#5d6570"/><circle cx="13" cy="7.8" r="1.45" fill="#5d6570"/></svg>
<div class="a" style="left:2340px;top:445px;width:599px;height:2px;background:#2f343c;border-radius:0px;"></div>
<div class="t" style="left:2371px;top:472.82px;font-size:27.85px;color:#9aa3ad;font-weight:bold;letter-spacing:-0.675px;">Page Imports</div>
<svg style="left:2558px;top:474px;" width="26" height="26" viewBox="0 0 26 26"><circle cx="13" cy="13" r="10.5" fill="none" stroke="#5d6570" stroke-width="2"/><rect x="11.9" y="11" width="2.3" height="7.5" fill="#5d6570"/><circle cx="13" cy="7.8" r="1.45" fill="#5d6570"/></svg>
<svg style="left:2878px;top:472px;" width="34" height="34" viewBox="0 0 34 34"><g fill="none" stroke="#9aa3ad" stroke-width="2.4" stroke-linejoin="round" stroke-linecap="round"><path d="M3,30.5 V23.5 L21.5,5 Q24.5,2 27.5,5 L29,6.5 Q32,9.5 29,12.5 L10.5,31 H3 Z"/><path d="M18,8.5 L25.5,16"/><path d="M19.5,31 H31"/></g></svg>
<div class="a" style="left:2340px;top:527px;width:599px;height:2px;background:#343a44;border-radius:0px;"></div>
<svg style="left:2368px;top:549px;" width="22" height="32" viewBox="0 0 22 32"><rect x="2.8" y="2.8" width="15.5" height="25.5" rx="3" fill="none" stroke="#fff" stroke-width="3"/><rect x="3" y="23" width="15" height="5.5" fill="#fff"/><circle cx="10.5" cy="25.8" r="1.6" fill="#15181b"/></svg>
<div class="t" style="left:2406px;top:552.28px;font-size:25.66px;color:#ffffff;font-weight:bold;letter-spacing:-0.743px;">Scaffold</div>
<div class="a" style="left:2365px;top:597px;width:388px;height:65px;background:#0b0e11;border:2px solid #2e333b;border-radius:16px;"></div>
<div class="t" style="left:2388px;top:615.80px;font-size:28.59px;color:#ffffff;font-weight:normal;letter-spacing:-1.028px;">TestPage2Copy</div>
<div class="a" style="left:2771px;top:597px;width:63px;height:64px;background:#1b1f24;border:2px solid #343a44;border-radius:14px;"></div>
<svg style="left:2786px;top:612px;" width="34" height="34" viewBox="0 0 34 34"><g fill="none" stroke="#fff" stroke-width="2.4" stroke-linejoin="round"><path d="M8.5,24.5 Q3.5,24.5 3.5,19.5 V8.5 Q3.5,3.5 8.5,3.5 H18 Q22,3.5 23,6.5"/><rect x="9" y="8.5" width="20" height="21" rx="5"/></g><text x="19" y="25.3" text-anchor="middle" font-family="Liberation Sans" font-weight="bold" font-size="14" fill="#fff">D</text></svg>
<div class="a" style="left:2853px;top:597px;width:62px;height:64px;background:#1b1f24;border:2px solid #343a44;border-radius:14px;"></div>
<svg style="left:2869px;top:612px;" width="30" height="34" viewBox="0 0 30 34"><g fill="#fff"><rect x="2" y="6" width="26" height="3.5"/><rect x="10" y="2" width="10" height="3"/><path d="M5,11 H25 L24,30.5 H6 Z"/></g><g fill="#1b1f24"><rect x="9.5" y="14" width="2.6" height="13.5"/><rect x="13.7" y="14" width="2.6" height="13.5"/><rect x="17.9" y="14" width="2.6" height="13.5"/></g></svg>
<div class="a" style="left:2365px;top:684px;width:550px;height:80px;background:#0b0e11;border:2px solid #2e333b;border-radius:16px;"></div>
<div class="t" style="left:2397px;top:710.67px;font-size:26.61px;color:#5b6168;font-weight:normal;letter-spacing:0.056px;">Describe your page here...</div>
<div class="a" style="left:2365px;top:785px;width:550px;height:71px;background:#1f2327;border-radius:16px;"></div>
<div class="a" style="left:2368px;top:789px;width:102px;height:63px;background:#0f1113;border-radius:14px;"></div>
<svg style="left:2399px;top:800px;" width="42" height="42" viewBox="0 0 42 42"><g fill="none" stroke="#fff" stroke-width="3" stroke-linejoin="round" stroke-linecap="round"><path d="M12.1,39.2 L3.2,30.6 L28.6,5.2 L37.9,14.8 Z"/><path d="M9.3,24.5 L12.5,27.7 M13.1,20.7 L15.6,23.2 M16.9,16.9 L20.1,20.1 M20.7,13.1 L23.2,15.6 M24.5,9.3 L27.7,12.5"/><path d="M8.5,17.7 L3.2,12.1 L9.5,4.9 L15.1,10.8"/><path d="M25,34.9 L29,37.9 L38.2,40.8 L36.2,32.2 L32.3,28"/></g></svg>
<svg style="left:2505px;top:798px;" width="50" height="46" viewBox="0 0 50 46"><g fill="none" stroke="#8c95a1" stroke-width="2.5" stroke-linecap="round" stroke-linejoin="round"><path d="M10,12 Q16,19 16,26 Q15.5,39 28,39.2"/><path d="M26.9,6.5 L42.8,15.1 L26.9,24.3 Z"/><path d="M36.2,22.4 L40.1,29.3"/></g><g fill="#8c95a1"><circle cx="9.8" cy="11.5" r="4.8"/><circle cx="31.9" cy="39.2" r="4.8"/></g></svg>
<svg style="left:2621px;top:802px;" width="40" height="40" viewBox="0 0 40 40"><g fill="none" stroke="#8c95a1" stroke-width="2.4"><rect x="1.5" y="1.5" width="35" height="36" rx="3"/><path d="M1.5,13.5 H36.5 M1.5,25.5 H36.5"/></g><g fill="#8c95a1"><circle cx="24" cy="7.5" r="2.2"/><circle cx="30" cy="7.5" r="2.2"/><circle cx="24" cy="19.5" r="2.2"/><circle cx="30" cy="19.5" r="2.2"/><circle cx="24" cy="31.5" r="2.2"/><circle cx="30" cy="31.5" r="2.2"/></g></svg>
<svg style="left:2742px;top:808px;" width="24" height="24" viewBox="0 0 24 24"><path d="M2,1 L22,12 L2,23 Z" fill="#8c95a1"/></svg>
<svg style="left:2844px;top:802px;" width="36" height="40" viewBox="0 0 36 40"><g fill="none" stroke="#8c95a1" stroke-width="2.4" stroke-linejoin="round"><rect x="1.5" y="1.5" width="31" height="37" rx="5"/><path d="M9,3 H25" stroke-width="3"/><path d="M7,15 V28.5 H27 V18.5 H18 L15.5,15 Z"/></g></svg>
<div class="t" style="left:2365px;top:891.88px;font-size:25.3px;color:#ffffff;font-weight:bold;letter-spacing:-0.842px;">Visibility</div>
<svg style="left:2467px;top:891px;" width="26" height="26" viewBox="0 0 26 26"><circle cx="13" cy="13" r="10.5" fill="none" stroke="#5d6570" stroke-width="2"/><rect x="11.9" y="11" width="2.3" height="7.5" fill="#5d6570"/><circle cx="13" cy="7.8" r="1.45" fill="#5d6570"/></svg>
<svg style="left:2884px;top:896px;" width="28" height="18" viewBox="0 0 28 18"><path d="M2,2.5 L13.5,14 L25,2.5" fill="none" stroke="#9aa3ad" stroke-width="2.6" stroke-linecap="round" stroke-linejoin="round"/></svg>
<div class="t" style="left:2365px;top:941.44px;font-size:26.42px;color:#9aa3ad;font-weight:normal;letter-spacing:-0.096px;">Opacity</div>
<svg style="left:2459.5px;top:942px;" width="26" height="26" viewBox="0 0 26 26"><circle cx="13" cy="13" r="10.5" fill="none" stroke="#5d6570" stroke-width="2"/><rect x="11.9" y="11" width="2.3" height="7.5" fill="#5d6570"/><circle cx="13" cy="7.8" r="1.45" fill="#5d6570"/></svg>
<svg style="left:2499px;top:942px;" width="28" height="28" viewBox="0 0 28 28"><g fill="none" stroke="#d9825a" stroke-width="2.2" stroke-linecap="round"><circle cx="5.5" cy="5.5" r="3.5"/><path d="M13.5,5.5 H25.5"/><circle cx="21" cy="21" r="3.5"/><path d="M1.5,21 H13"/></g></svg>
<div class="a" style="left:2376px;top:1006px;width:325px;height:10px;background:#4b39ef;border-radius:5px;"></div>
<svg style="left:2689px;top:999px;" width="24" height="24" viewBox="0 0 24 24"><circle cx="12" cy="12" r="12" fill="#fff"/></svg>
<div class="a" style="left:2733px;top:979px;width:182px;height:63px;background:#15181b;border:2px solid #2e333b;border-radius:14px;"></div>
<div class="t" style="left:2754px;top:998.43px;font-size:24.3px;color:#ffffff;font-weight:bold;letter-spacing:0px;">1</div>
<div class="t" style="left:2365px;top:1071.39px;font-size:26.47px;color:#ffffff;font-weight:bold;letter-spacing:-1.004px;">Animated Opacity</div>
<svg style="left:2581.5px;top:1072px;" width="26" height="26" viewBox="0 0 26 26"><circle cx="13" cy="13" r="10.5" fill="none" stroke="#5d6570" stroke-width="2"/><rect x="11.9" y="11" width="2.3" height="7.5" fill="#5d6570"/><circle cx="13" cy="7.8" r="1.45" fill="#5d6570"/></svg>
<div class="a" style="left:2832px;top:1061px;width:83px;height:48px;background:#14171a;border:2px solid #2b2f37;border-radius:24px;"></div>
<svg style="left:2835px;top:1064px;" width="44" height="44" viewBox="0 0 44 44"><circle cx="21.5" cy="21" r="21" fill="#2f343c"/></svg>
<div class="a" style="left:2340px;top:1130px;width:599px;height:2px;background:#2f343c;border-radius:0px;"></div>
<div class="t" style="left:2365px;top:1158.40px;font-size:25.52px;color:#ffffff;font-weight:bold;letter-spacing:-0.762px;">Page (Scaffold) Properties</div>
<svg style="left:2671px;top:1157px;" width="26" height="26" viewBox="0 0 26 26"><circle cx="13" cy="13" r="10.5" fill="none" stroke="#5d6570" stroke-width="2"/><rect x="11.9" y="11" width="2.3" height="7.5" fill="#5d6570"/><circle cx="13" cy="7.8" r="1.45" fill="#5d6570"/></svg>
<svg style="left:2884px;top:1162px;" width="28" height="18" viewBox="0 0 28 18"><path d="M2,2.5 L13.5,14 L25,2.5" fill="none" stroke="#9aa3ad" stroke-width="2.6" stroke-linecap="round" stroke-linejoin="round"/></svg>
<div class="t" style="left:2365px;top:1207.77px;font-size:25.08px;color:#9aa3ad;font-weight:normal;letter-spacing:-0.049px;">Background Color</div>
<svg style="left:2575px;top:1208px;" width="28" height="28" viewBox="0 0 28 28"><g fill="none" stroke="#d9825a" stroke-width="2.2" stroke-linecap="round"><circle cx="5.5" cy="5.5" r="3.5"/><path d="M13.5,5.5 H25.5"/><circle cx="21" cy="21" r="3.5"/><path d="M1.5,21 H13"/></g></svg>
<div class="a" style="left:2365px;top:1246px;width:262px;height:62px;background:#15181b;border:2px solid #2e333b;border-radius:14px;"></div>
<div class="a" style="left:2381px;top:1265px;width:25px;height:24px;background:#f1f4f8;border-radius:5px;"></div>
<div class="t" style="left:2430px;top:1252.12px;font-size:22.3px;color:#ffffff;font-weight:normal;letter-spacing:-0.2px;">Primary</div>
<div class="t" style="left:2430px;top:1281.12px;font-size:22.3px;color:#ffffff;font-weight:normal;letter-spacing:-0.2px;">Background</div>
<svg style="left:2582px;top:1273px;" width="22" height="22" viewBox="0 0 22 22"><path d="M2.5,2.5 L19.5,19.5 M19.5,2.5 L2.5,19.5" stroke="#c4c8cc" stroke-width="2.6"/></svg>
<div class="t" style="left:2365px;top:1338.06px;font-size:24.74px;color:#9aa3ad;font-weight:normal;letter-spacing:-0.331px;">Safe Area</div>
<svg style="left:2481px;top:1338px;" width="26" height="26" viewBox="0 0 26 26"><circle cx="13" cy="13" r="10.5" fill="none" stroke="#5d6570" stroke-width="2"/><rect x="11.9" y="11" width="2.3" height="7.5" fill="#5d6570"/><circle cx="13" cy="7.8" r="1.45" fill="#5d6570"/></svg>
<div class="a" style="left:2832px;top:1327px;width:83px;height:48px;background:#4b39ef;border-radius:24px;"></div>
<svg style="left:2870px;top:1329px;" width="44" height="44" viewBox="0 0 44 44"><circle cx="22" cy="22" r="22" fill="#fff"/></svg>
<div class="t" style="left:2365px;top:1406.16px;font-size:24.97px;color:#9aa3ad;font-weight:normal;letter-spacing:-0.136px;">Hide Keyboard on Tap</div>
<svg style="left:2618px;top:1406px;" width="26" height="26" viewBox="0 0 26 26"><circle cx="13" cy="13" r="10.5" fill="none" stroke="#5d6570" stroke-width="2"/><rect x="11.9" y="11" width="2.3" height="7.5" fill="#5d6570"/><circle cx="13" cy="7.8" r="1.45" fill="#5d6570"/></svg>
<div class="a" style="left:2832px;top:1394px;width:83px;height:48px;background:#4b39ef;border-radius:24px;"></div>
<svg style="left:2870px;top:1396px;" width="44" height="44" viewBox="0 0 44 44"><circle cx="22" cy="22" r="22" fill="#fff"/></svg>
<div class="t" style="left:2365px;top:1473.74px;font-size:25.12px;color:#9aa3ad;font-weight:normal;letter-spacing:-0.014px;">Disable Android Back Button</div>
<svg style="left:2692px;top:1473px;" width="26" height="26" viewBox="0 0 26 26"><circle cx="13" cy="13" r="10.5" fill="none" stroke="#5d6570" stroke-width="2"/><rect x="11.9" y="11" width="2.3" height="7.5" fill="#5d6570"/><circle cx="13" cy="7.8" r="1.45" fill="#5d6570"/></svg>
<div class="a" style="left:2832px;top:1463px;width:83px;height:48px;background:#14171a;border:2px solid #2b2f37;border-radius:24px;"></div>
<svg style="left:2835px;top:1466px;" width="44" height="44" viewBox="0 0 44 44"><circle cx="21.5" cy="21" r="21" fill="#2f343c"/></svg>
<div class="t" style="left:2365px;top:1541.82px;font-size:24.78px;color:#9aa3ad;font-weight:normal;letter-spacing:-0.056px;">Disable Resize To Avoid Bottom Inset</div>
<svg style="left:2782px;top:1542px;" width="26" height="26" viewBox="0 0 26 26"><circle cx="13" cy="13" r="10.5" fill="none" stroke="#5d6570" stroke-width="2"/><rect x="11.9" y="11" width="2.3" height="7.5" fill="#5d6570"/><circle cx="13" cy="7.8" r="1.45" fill="#5d6570"/></svg>
<div class="a" style="left:2832px;top:1531px;width:83px;height:48px;background:#14171a;border:2px solid #2b2f37;border-radius:24px;"></div>
<svg style="left:2835px;top:1534px;" width="44" height="44" viewBox="0 0 44 44"><circle cx="21.5" cy="21" r="21" fill="#2f343c"/></svg>
<div class="a" style="left:2340px;top:1601px;width:599px;height:2px;background:#2f343c;border-radius:0px;"></div>
<div class="t" style="left:2364.5px;top:1627.91px;font-size:25.27px;color:#ffffff;font-weight:bold;letter-spacing:-0.543px;">Nav Bar Item Properties</div>
<svg style="left:2645px;top:1628px;" width="26" height="26" viewBox="0 0 26 26"><circle cx="13" cy="13" r="10.5" fill="none" stroke="#5d6570" stroke-width="2"/><rect x="11.9" y="11" width="2.3" height="7.5" fill="#5d6570"/><circle cx="13" cy="7.8" r="1.45" fill="#5d6570"/></svg>
<svg style="left:2884px;top:1632px;" width="28" height="18" viewBox="0 0 28 18"><path d="M2,2.5 L13.5,14 L25,2.5" fill="none" stroke="#9aa3ad" stroke-width="2.6" stroke-linecap="round" stroke-linejoin="round"/></svg>
<div class="a" style="left:2804px;top:1526px;width:96px;height:96px;border-radius:48px;background:#4b39ef;box-shadow:0 4px 12px rgba(0,0,0,0.3)"></div>
<svg style="left:2829px;top:1549px;" width="46" height="50" viewBox="0 0 46 50"><path d="M7,1 H37 Q43,1 43,7 V48 L34,44 H7 Q1,44 1,38 V7 Q1,1 7,1 Z" fill="#fff"/><path d="M8,30 Q22,37 36,30" fill="none" stroke="#4b39ef" stroke-width="2.8" stroke-linecap="round"/></svg>
<div class="a" style="left:2643px;top:108px;width:206px;height:74px;border-radius:15px;background:#2f343d"></div>
<svg style="left:2726px;top:90px;" width="40" height="20" viewBox="0 0 40 20"><path d="M0,19 Q8,19 14,9 Q20,0 26,9 Q32,19 40,19 Z" fill="#2f343d"/></svg>
<div class="t" style="left:2668px;top:131.08px;font-size:26.72px;color:#ffffff;font-weight:normal;letter-spacing:0.15px;">Preview App</div>
<div class="a" style="left:2694px;top:2px;width:104px;height:101px;border:5px solid #e8432a"></div>
</body></html>
